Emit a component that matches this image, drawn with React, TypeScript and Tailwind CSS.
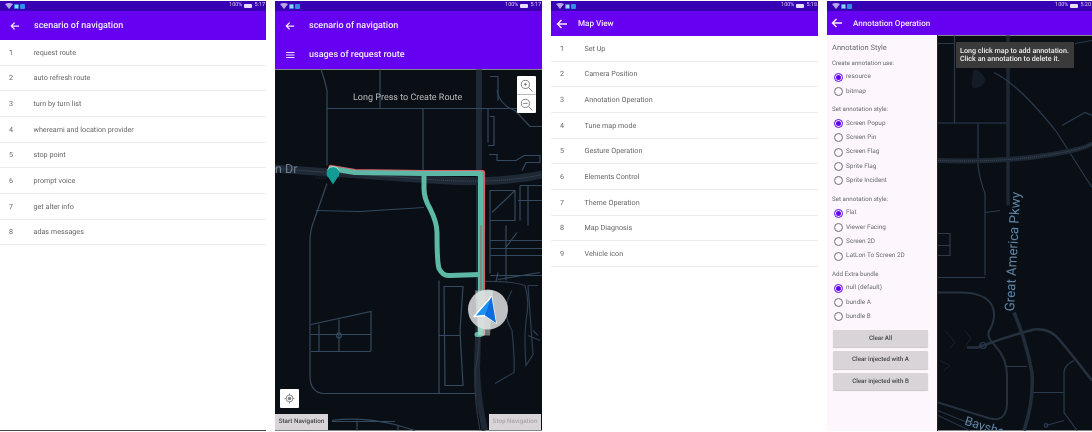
import React from "react";

const font = { fontFamily: "Roboto, sans-serif" };

function StatusBar({ time }: { time: string }) {
  return (
    <div className="h-[10px] bg-[#3700b3] flex items-center justify-between pl-[5px] pr-[1px] shrink-0">
      <div className="flex items-center gap-[1px]">
        <svg width="8" height="6" viewBox="0 0 8 6">
          <path d="M0 1 Q4 -1 8 1 L4 6 Z" fill="#b9a6e8" />
        </svg>
        <div className="w-[5px] h-[5px] rounded-[1px] bg-[#9fd0f5] border border-[#2f8fe0]" />
        <div className="w-[5px] h-[5px] rounded-[1px] bg-[#2f8fe0]" />
      </div>
      <div className="flex items-center gap-[1px] text-[5.5px] leading-none text-[#d9cdf5]">
        <span>100%</span>
        <div className="w-[8px] h-[4px] bg-[#e6def8] rounded-[1px] mx-[1px]" />
        <span>{time}</span>
      </div>
    </div>
  );
}

function Arrow({ size = 10 }: { size?: number }) {
  return (
    <svg width={size} height={size} viewBox="0 0 24 24" fill="none" stroke="#f4edff" strokeWidth="3">
      <path d="M22 12H3M11 4l-8 8 8 8" />
    </svg>
  );
}

function ListRows({ items }: { items: string[] }) {
  return (
    <div className="flex flex-col">
      {items.map((t, i) => (
        <div key={t} className="h-[25.67px] pt-[1.5px] flex items-center border-b border-[#eeeaee] text-[7.2px] text-[#666666]">
          <span className="w-[33.5px] pl-[9px]">{i + 1}</span>
          <span>{t}</span>
        </div>
      ))}
    </div>
  );
}

function Radio({ label, on }: { label: string; on?: boolean }) {
  return (
    <div className="h-[14.33px] flex items-center pl-[7px] gap-[3px] text-[6.4px] text-[#6a6a6a]">
      <div className={`w-[9px] h-[9px] rounded-full border flex items-center justify-center ${on ? "border-[#6200ee]" : "border-[#6f6f6f]"}`}>
        {on && <div className="w-[5px] h-[5px] rounded-full bg-[#6200ee]" />}
      </div>
      <span>{label}</span>
    </div>
  );
}

function Group({ title, labels, big }: { title: string; labels: string[]; big?: boolean }) {
  return (
    <div className={`flex flex-col ${big ? "mb-[3px]" : "mb-[4.8px]"}`}>
      <div className={`h-[13px] flex items-center pl-[5px] text-[#6a6a6a] ${big ? "text-[7.5px]" : "text-[6.2px]"}`}>{title}</div>
      {labels.map((l, i) => (
        <Radio key={l} label={l} on={i === 0} />
      ))}
    </div>
  );
}

function GreyBtn({ label }: { label: string }) {
  return (
    <div className="h-[17.5px] ml-[6px] mr-[9px] bg-[#d8d4d8] rounded-[1px] shadow-[0_1px_1px_rgba(0,0,0,0.2)] flex items-center justify-center text-[6.2px] font-medium text-[#444444]">
      {label}
    </div>
  );
}

function NavMap() {
  const road = "#33495f";
  const road2 = "#1f2935";
  return (
    <svg className="w-full h-full block" viewBox="275 69 267 361" fill="none" style={font}>
      <rect x="275" y="69" width="267" height="361" fill="#0a0f16" />
      <path d="M479 69V300Q478 340 477 370Q478 400 485 430" stroke={road2} strokeWidth="6" />
      <path d="M275 168Q300 170 331 172T430 179T542 174" stroke={road2} strokeWidth="8" />
      <path d="M275 168Q300 170 331 172T430 179T542 174" stroke="#4c5a68" strokeWidth="0.8" strokeDasharray="1 1" />
      <g stroke={road} strokeWidth="1.2">
        <path d="M321 69Q325 80 327 90V165" />
        <path d="M327 108H517M380 69V108M423 108V172" />
        <path d="M327 183L314 220Q310 230 310 240V375Q310 393 325 393H475" />
        <path d="M316 210L360 211L424 207" />
        <path d="M490 76H498V100M488 108V142M490 116H494V145H488M489 154H497V160H516L524 155H540V162H526L522 170" />
        <path d="M497 90Q500 105 515 110L530 126H542M490 190H515V220H490ZM515 190L492 212M520 185H542M520 185V220M528 185V225M542 200H518M490 240H542M490 248H542M490 255H542" />
        <path d="M490 273V220M490 275H542M496 281L498 272M498 279L540 272M506 280V225M517 232L505 248" />
        <path d="M439 280V393M439 335H460M444 286H463L460 330L463 385H445ZM311 324L371 311V350Q371 351 369 351H311M319 324V351M339 319V351M311 334H371" />
        <circle cx="339" cy="335" r="2.5" />
        <path d="M332 420Q360 416 395 424L415 430M332 421H395M357 420V430M398 425V430" />
        <path d="M480 281Q510 280 525 285Q530 300 526 320Q524 340 526 365L533 354L528 285M528 285H538M533 330L538 335M528 335L540 340M512 290Q500 310 512 330Q515 360 514 372L495 383" strokeOpacity="0.8" />
      </g>
      <path d="M481 300Q480 350 475 370Q474 400 480 430" stroke="#323c49" strokeWidth="1" />
      <g strokeLinecap="round" strokeLinejoin="round">
        <path d="M331 167L355 171L424 172H482.5V333" stroke="#d9606a" strokeWidth="5.2" />
        <path d="M331 168L355 172L424 173H480.5V334H477" stroke="#5db8a5" strokeWidth="5" />
        <path d="M424 173V188Q424 198 430 208Q437 222 437 232Q437 262 439 268Q443 276 450 275L480 274" stroke="#5db8a5" strokeWidth="5" />
      </g>
      <path d="M481 225V322" stroke="#b33f4c" strokeWidth="0.8" />
      <text x="316" y="178" fontSize="7" fill="#1c2330">Dell Ave</text>
      <path d="M326.5 173a6.5 6.5 0 1 1 13 0q0 3 -2 4l-4.5 7l-4.5 -7q-2 -1 -2 -4Z" fill="#129c95" />
      <path d="M327 170a6.5 6.5 0 0 1 12 0" stroke="#dff" strokeWidth="0.6" />
      <text x="275" y="172" fontSize="12.5" fill="#6a7e94">n Dr</text>
      <circle cx="488" cy="309" r="20" fill="#cfcfd2" fillOpacity="0.92" />
      <path d="M475 290L478 335H490L493 290Z" fill="#e8f3ef" fillOpacity="0.45" />
      <path d="M491.5 296L474 316L485 315L496 322.5Z" fill="#1e90ef" stroke="#fff" strokeWidth="1.4" strokeLinejoin="round" />
      <path d="M491.5 296L485 315L496 322.5Z" fill="#0b6be0" />
    </svg>
  );
}

function AnnotationMap() {
  const road = "#2a3b4e";
  return (
    <svg className="w-full h-full block" viewBox="938 35 154 395" fill="none" style={font}>
      <rect x="938" y="35" width="154" height="395" fill="#0a0f16" />
      <g stroke={road} strokeWidth="1.2">
        <path d="M938 43H955M954.5 35V122M938 122.5H1008M978 122V165Q980 180 985 193V275M985 277H938M985 212L1000 210" />
        <path d="M1008 35V205" stroke="#1e2835" strokeWidth="3.5" />
        <path d="M994 72Q1020 85 1057 132L1092 187M1092 40L1075 43M1062 125L1085 112L1092 115" />
        <path d="M938 233H950V255H938M938 245H950" />
        <path d="M938 292H960Q985 292 992 305Q997 315 990 329Q985 335 995 345Q1007 358 1007 375V405Q1005 422 990 418L938 402" strokeWidth="2" stroke="#25313f" />
        <path d="M1007 366H1027M1032 392H1064M1074 360Q1064 365 1064 372V412L1077 430M1046 425L1064 420" />
        <circle cx="1046" cy="425" r="1.8" />
        <path d="M938 410L975 425M938 415L970 430" strokeOpacity="0.8" />
        <path d="M967 347H978L983 345Q1010 335 1034 329Q1050 327 1060 340Q1075 358 1092 380" stroke="#25313f" strokeWidth="2.5" />
        <circle cx="983" cy="345" r="3" />
      </g>
      <path d="M1014 312Q1026 340 1032 372Q1034 400 1024 430" stroke="#222d3b" strokeWidth="3.5" />
      <path d="M938 160Q1000 162 1045 155T1092 142" stroke="#1e2835" strokeWidth="5" />
      <path d="M938 160Q1000 162 1045 155T1092 142" stroke="#4c5a68" strokeWidth="0.7" strokeDasharray="1 1" />
      <path d="M973 70Q978 66 985 78Q985 85 978 87Q970 90 972 80Z" fill="#141c28" />
      <g stroke="#182230">
        <path d="M945 330l10 12l-5 6M965 330l6 8l-6 8M940 360l10 5l-6 5" />
      </g>
      <text transform="translate(1014 311) rotate(-87)" fontSize="13.3" fill="#5f86a8">Great America Pkwy</text>
      <text transform="translate(964 424) rotate(17)" fontSize="12.5" fill="#5f86a8">Bayshore</text>
    </svg>
  );
}

export default function App() {
  return (
    <div className="w-[1092px] h-[432px] bg-white flex overflow-hidden pt-[1px] [text-rendering:geometricPrecision] blur-[0.35px]" style={font}>
      <div className="w-[266px] h-[430px] flex flex-col shrink-0 border-b border-[#444]">
        <StatusBar time="5:17" />
        <div className="h-[29px] bg-[#6600f0] flex items-center pl-[10px] gap-[14px] text-[9px] font-medium text-[#f0e8ff]">
          <Arrow />
          <span className="mt-[2px]">scenario of navigation</span>
        </div>
        <ListRows items={["request route", "auto refresh route", "turn by turn list", "whereami and location provider", "stop point", "prompt voice", "get alter info", "adas messages"]} />
      </div>

      <div className="w-[267px] h-[430px] ml-[9px] flex flex-col shrink-0">
        <StatusBar time="5:17" />
        <div className="h-[58px] bg-[#6600f0] flex flex-col text-[9px] font-medium text-[#f0e8ff]">
          <div className="h-[29px] flex items-center pl-[10px] gap-[14px]">
            <Arrow />
            <span className="mt-[3px]">scenario of navigation</span>
          </div>
          <div className="h-[29px] flex items-center pl-[10px] gap-[14px]">
            <svg width="10" height="10" viewBox="0 0 10 10" stroke="#f0e8ff" strokeWidth="1.1">
              <path d="M1 2.5H9.5M1 5H9.5M1 7.5H9.5" />
            </svg>
            <span className="mt-[3px]">usages of request route</span>
          </div>
        </div>
        <div className="relative flex-1 overflow-hidden">
          <NavMap />
          <div className="absolute left-[78px] top-[23px] text-[9px] text-[#b9b9b9] whitespace-nowrap">Long Press to Create Route</div>
          <div className="absolute left-[242px] top-[7px] w-[19px] h-[37px] bg-white rounded-[1px] flex flex-col">
            <div className="flex-1 flex items-center justify-center border-b border-[#bbb]">
              <svg width="13" height="13" viewBox="0 0 24 24" fill="none" stroke="#777" strokeWidth="1.7">
                <circle cx="10" cy="10" r="7.5" />
                <circle cx="10" cy="10" r="1.5" fill="#777" />
                <path d="M16 16l7 7" />
              </svg>
            </div>
            <div className="flex-1 flex items-center justify-center">
              <svg width="13" height="13" viewBox="0 0 24 24" fill="none" stroke="#777" strokeWidth="1.7">
                <circle cx="10" cy="10" r="7.5" />
                <path d="M6 10h8M16 16l7 7" />
              </svg>
            </div>
          </div>
          <div className="absolute left-[5px] bottom-[23px] w-[19px] h-[19px] bg-white rounded-[1px] flex items-center justify-center">
            <svg width="11" height="11" viewBox="0 0 24 24" fill="none" stroke="#777" strokeWidth="1.8">
              <circle cx="12" cy="12" r="7.5" />
              <circle cx="12" cy="12" r="3" fill="#777" />
              <path d="M12 1v4M12 19v4M1 12h4M19 12h4" />
            </svg>
          </div>
          <div className="absolute left-0 bottom-[1px] w-[53px] h-[16px] bg-[#d8d4d8] flex items-center justify-center text-[6.3px] font-medium text-[#444444] whitespace-nowrap">Start Navigation</div>
          <div className="absolute right-[1px] bottom-[1px] w-[52px] h-[16px] bg-[#d8d4d8] flex items-center justify-center text-[6.3px] font-medium text-[#aaa6aa] whitespace-nowrap">Stop Navigation</div>
        </div>
      </div>

      <div className="w-[267px] h-[430px] ml-[9px] flex flex-col shrink-0">
        <StatusBar time="5:18" />
        <div className="h-[25px] bg-[#6600f0] flex items-center pl-[5px] gap-[10px] text-[8.1px] font-medium text-[#f0e8ff]">
          <Arrow size={12} />
          <span>Map View</span>
        </div>
        <ListRows items={["Set Up", "Camera Position", "Annotation Operation", "Tune map mode", "Gesture Operation", "Elements Control", "Theme Operation", "Map Diagnosis", "Vehicle icon"]} />
      </div>

      <div className="w-[265px] h-[430px] ml-[9px] flex flex-col shrink-0">
        <StatusBar time="5:20" />
        <div className="h-[24px] bg-[#6600f0] flex items-center pl-[4px] gap-[10px] text-[8.1px] font-medium text-[#f0e8ff]">
          <Arrow size={12} />
          <span>Annotation Operation</span>
        </div>
        <div className="flex-1 flex min-h-0">
          <div className="w-[111px] bg-[#fdf7fd] border-r border-[#222] flex flex-col pt-[6px] shrink-0">
            <Group title="Annotation Style" labels={[]} big />
            <Group title="Create annotation use:" labels={["resource", "bitmap"]} />
            <Group title="Set annotation style:" labels={["Screen Popup", "Screen Pin", "Screen Flag", "Sprite Flag", "Sprite Incident"]} />
            <Group title="Set annotation style:" labels={["Flat", "Viewer Facing", "Screen 2D", "LatLon To Screen 2D"]} />
            <Group title="Add Extra bundle" labels={["null (default)", "bundle A", "bundle B"]} />
            <div className="flex flex-col gap-[4px] mt-[1px]">
              <GreyBtn label="Clear All" />
              <GreyBtn label="Clear injected with A" />
              <GreyBtn label="Clear injected with B" />
            </div>
          </div>
          <div className="relative flex-1 overflow-hidden">
            <AnnotationMap />
            <div className="absolute left-[18px] top-[7px] w-[118px] h-[26px] bg-[#3a3a3a] pl-[4px] flex flex-col justify-center text-[7.2px] leading-[8.5px] font-medium text-[#eeeeee] whitespace-nowrap">
              <span>Long click map to add annotation.</span>
              <span>Click an annotation to delete it.</span>
            </div>
          </div>
        </div>
      </div>
    </div>
  );
}
